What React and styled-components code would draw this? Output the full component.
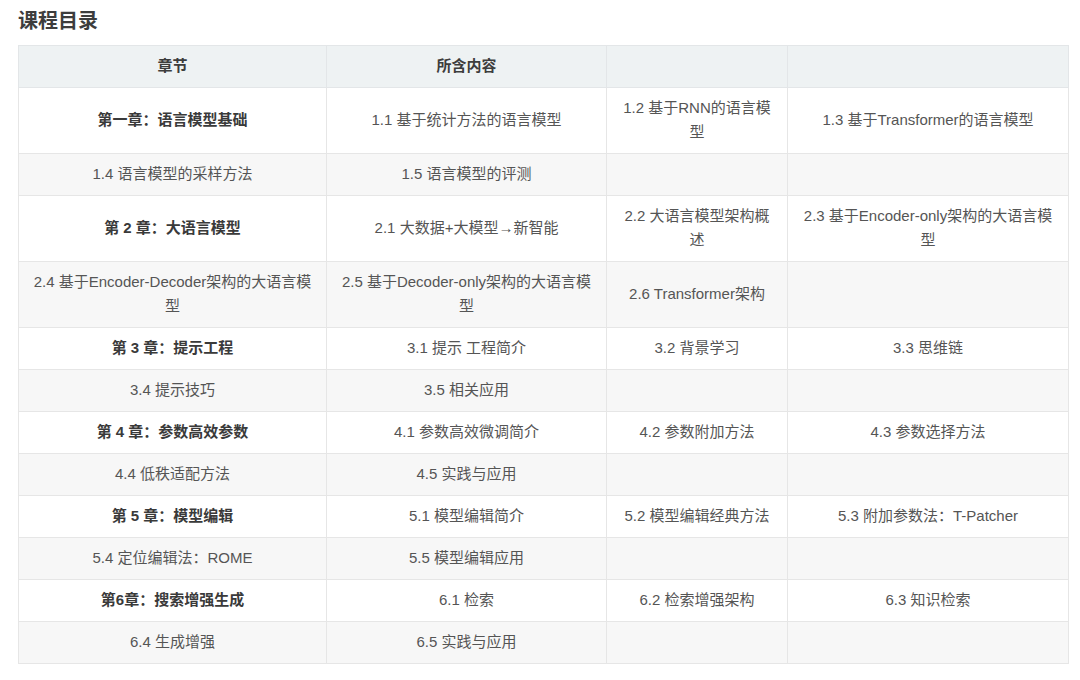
import React from "react";
import styled, { createGlobalStyle } from "styled-components";

const Global = createGlobalStyle`
  html, body {
    margin: 0;
    padding: 0;
    background: #fff;
  }
  body {
    font-family: "Liberation Sans", Arial, "Noto Sans CJK SC", sans-serif;
    color: #555;
  }
`;

const Page = styled.div`
  padding: 7px 12px 0 18px;
`;

const Title = styled.h2`
  margin: 0 0 10px;
  font-size: 20px;
  line-height: 28px;
  font-weight: 700;
  color: #3d3d3d;
`;

const Table = styled.table`
  width: 1050px;
  border-collapse: collapse;
  table-layout: fixed;
  font-size: 15px;
  line-height: 24px;
`;

const HeadCell = styled.th`
  background: #eef2f3;
  border: 1px solid #e3e6e8;
  padding: 8px 10px 9px;
  font-weight: 700;
  color: #3d3d3d;
  text-align: center;
`;

const Row = styled.tr`
  background: ${p => (p.$alt ? "#f7f7f7" : "#fff")};
`;

const Cell = styled.td`
  border: 1px solid #e6e6e6;
  padding: 8px 10px 9px;
  text-align: center;
  vertical-align: middle;
  color: ${p => (p.$bold ? "#3a3a3a" : "#555")};
  font-weight: ${p => (p.$bold ? 700 : 400)};
`;

const rows = [
  ["第一章：语言模型基础", "1.1 基于统计方法的语言模型", "1.2 基于RNN的语言模型", "1.3 基于Transformer的语言模型"],
  ["1.4 语言模型的采样方法", "1.5 语言模型的评测", "", ""],
  ["第 2 章：大语言模型", "2.1 大数据+大模型→新智能", "2.2 大语言模型架构概述", "2.3 基于Encoder-only架构的大语言模型"],
  ["2.4 基于Encoder-Decoder架构的大语言模型", "2.5 基于Decoder-only架构的大语言模型", "2.6 Transformer架构", ""],
  ["第 3 章：提示工程", "3.1 提示 工程简介", "3.2 背景学习", "3.3 思维链"],
  ["3.4 提示技巧", "3.5 相关应用", "", ""],
  ["第 4 章：参数高效参数", "4.1 参数高效微调简介", "4.2 参数附加方法", "4.3 参数选择方法"],
  ["4.4 低秩适配方法", "4.5 实践与应用", "", ""],
  ["第 5 章：模型编辑", "5.1 模型编辑简介", "5.2 模型编辑经典方法", "5.3 附加参数法：T-Patcher"],
  ["5.4 定位编辑法：ROME", "5.5 模型编辑应用", "", ""],
  ["第6章：搜索增强生成", "6.1 检索", "6.2 检索增强架构", "6.3 知识检索"],
  ["6.4 生成增强", "6.5 实践与应用", "", ""],
];

export default function App() {
  return (
    <Page>
      <Global />
      <Title>课程目录</Title>
      <Table>
        <colgroup>
          <col style={{ width: 308 }} />
          <col style={{ width: 280 }} />
          <col style={{ width: 181 }} />
          <col style={{ width: 281 }} />
        </colgroup>
        <thead>
          <tr>
            <HeadCell>章节</HeadCell>
            <HeadCell>所含内容</HeadCell>
            <HeadCell />
            <HeadCell />
          </tr>
        </thead>
        <tbody>
          {rows.map((r, i) => (
            <Row key={i} $alt={i % 2 === 1}>
              {r.map((c, j) => (
                <Cell key={j} $bold={j === 0 && i % 2 === 0}>
                  {c}
                </Cell>
              ))}
            </Row>
          ))}
        </tbody>
      </Table>
    </Page>
  );
}
